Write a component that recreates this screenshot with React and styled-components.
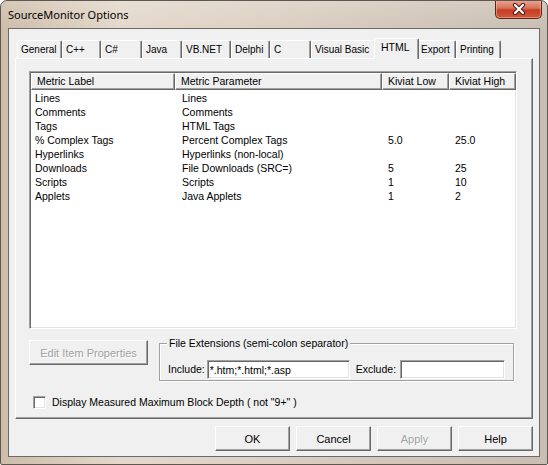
import React from "react";
import styled, { createGlobalStyle } from "styled-components";

const GlobalStyle = createGlobalStyle`
  html, body {
    margin: 0;
    padding: 0;
    background: #ffffff;
  }
  body {
    font-family: "Liberation Sans", Arial, sans-serif;
    font-size: 10.5px;
    color: #000;
  }
`;

const tabs = [
  { label: "General", width: 45 },
  { label: "C++", width: 39 },
  { label: "C#", width: 41 },
  { label: "Java", width: 40 },
  { label: "VB.NET", width: 49 },
  { label: "Delphi", width: 39 },
  { label: "C", width: 41 },
  { label: "Visual Basic", width: 65 },
  { label: "HTML", width: 41, active: true },
  { label: "Export", width: 39 },
  { label: "Printing", width: 45 },
];

const columns = [
  { label: "Metric Label", pad: 4 },
  { label: "Metric Parameter", pad: 7 },
  { label: "Kiviat Low", pad: 6 },
  { label: "Kiviat High", pad: 6 },
];

const metrics = [
  ["Lines", "Lines", "", ""],
  ["Comments", "Comments", "", ""],
  ["Tags", "HTML Tags", "", ""],
  ["% Complex Tags", "Percent Complex Tags", "5.0", "25.0"],
  ["Hyperlinks", "Hyperlinks (non-local)", "", ""],
  ["Downloads", "File Downloads (SRC=)", "5", "25"],
  ["Scripts", "Scripts", "1", "10"],
  ["Applets", "Java Applets", "1", "2"],
];

const App = () => {
  return (
    <>
      <GlobalStyle />
      <Window>
        <TitleBar>
          <Title>SourceMonitor Options</Title>
          <CloseButton>
            <svg width="16" height="12" viewBox="0 0 16 12">
              <path d="M4 2 L12 10 M12 2 L4 10" stroke="#4a1f17" strokeWidth="4.2" strokeLinecap="round" fill="none" />
              <path d="M4 2 L12 10 M12 2 L4 10" stroke="#ffffff" strokeWidth="2.2" strokeLinecap="round" fill="none" />
            </svg>
          </CloseButton>
        </TitleBar>
        <Client>
          <TabRow>
            {tabs.map((t) => (
              <Tab key={t.label} $w={t.width} $active={t.active}>
                {t.label}
              </Tab>
            ))}
          </TabRow>
          <Panel>
            <ListView>
              <HeaderRow>
                {columns.map((c) => (
                  <HeaderCell key={c.label}>{c.label}</HeaderCell>
                ))}
              </HeaderRow>
              <Rows>
                {metrics.map((m) => (
                  <Row key={m[0]}>
                    {m.map((v, i) => (
                      <Cell key={i} $pad={columns[i].pad}>{v}</Cell>
                    ))}
                  </Row>
                ))}
              </Rows>
            </ListView>
            <ControlsRow>
              <Button $width={119} disabled>Edit Item Properties</Button>
              <GroupBox>
                <Legend>File Extensions (semi-colon separator)</Legend>
                <FieldLabel>Include:</FieldLabel>
                <TextInput $width={143} $gap={2} defaultValue="*.htm;*.html;*.asp" />
                <FieldLabel $gap={6}>Exclude:</FieldLabel>
                <TextInput $width={105} $gap={4} defaultValue="" />
              </GroupBox>
            </ControlsRow>
            <CheckRow>
              <CheckBox />
              <CheckLabel>Display Measured Maximum Block Depth ( not "9+" )</CheckLabel>
            </CheckRow>
          </Panel>
          <ButtonRow>
            <Button $width={75}>OK</Button>
            <Button $width={75}>Cancel</Button>
            <Button $width={75} disabled>Apply</Button>
            <Button $width={75}>Help</Button>
          </ButtonRow>
        </Client>
      </Window>
    </>
  );
};

const Window = styled.div`
  box-sizing: border-box;
  width: 548px;
  height: 465px;
  display: flex;
  flex-direction: column;
  border: 1px solid #5e5850;
  border-radius: 7px 7px 2px 2px;
  background:
    linear-gradient(180deg, rgba(255, 255, 255, 0.18) 0px, rgba(255, 255, 255, 0) 28px),
    linear-gradient(90deg, #cdbda9 0%, #e3d8ca 22%, #ddd1c3 45%, #d3c7ba 70%, #c9beb2 100%);
  overflow: hidden;
`;

const TitleBar = styled.div`
  height: 27px;
  display: flex;
  justify-content: space-between;
  align-items: flex-start;
  padding: 0 5px 0 7px;
`;

const Title = styled.div`
  margin-top: 6px;
  font-family: "Noto Sans", "Open Sans", sans-serif;
  font-size: 11px;
  line-height: 16px;
  color: #000;
`;

const CloseButton = styled.div`
  margin-top: -1px;
  width: 47px;
  height: 19px;
  box-sizing: border-box;
  display: flex;
  align-items: center;
  justify-content: center;
  border: 1px solid #5a241a;
  border-top: none;
  border-radius: 0 0 5px 5px;
  background: linear-gradient(180deg, #eaa795 0%, #d9725a 45%, #c43e24 55%, #d2573c 100%);
  box-shadow: inset 0 0 0 1px rgba(255, 210, 190, 0.45);
`;

const Client = styled.div`
  flex: 1;
  margin: 0 7px 7px 7px;
  border: 1px solid #6a6a6a;
  background: #f0f0f0;
  padding: 9px 6px 0 6px;
  display: flex;
  flex-direction: column;
`;

const TabRow = styled.div`
  height: 20px;
  display: flex;
  align-items: flex-start;
  padding-left: 2px;
`;

const Tab = styled.div`
  box-sizing: border-box;
  position: relative;
  z-index: ${(p) => (p.$active ? 3 : 1)};
  width: ${(p) => (p.$active ? p.$w + 4 : p.$w)}px;
  height: ${(p) => (p.$active ? 21 : 18)}px;
  margin: ${(p) => (p.$active ? "0 -2px 0 -2px" : "2px 0 0 0")};
  padding: ${(p) => (p.$active ? "2px 0 0 6px" : "2px 0 0 3px")};
  background: #f0f0f0;
  border-top: 1px solid #ffffff;
  border-left: 1px solid #ffffff;
  border-right: 1px solid #696969;
  box-shadow: inset -1px 0 0 #a0a0a0;
  border-radius: 2px 2px 0 0;
  font-size: ${(p) => (p.$active ? 10.5 : 10)}px;
  line-height: 13px;
  white-space: nowrap;
`;

const Panel = styled.div`
  box-sizing: border-box;
  height: 361px;
  border-top: 1px solid #ffffff;
  border-left: 1px solid #ffffff;
  border-right: 1px solid #696969;
  border-bottom: 1px solid #696969;
  box-shadow: inset -1px -1px 0 #a0a0a0;
  padding: 12px 15px 0 13px;
  display: flex;
  flex-direction: column;
`;

const ListView = styled.div`
  box-sizing: border-box;
  height: 258px;
  background: #ffffff;
  border-top: 1px solid #a0a0a0;
  border-left: 1px solid #a0a0a0;
  border-right: 1px solid #ffffff;
  border-bottom: 1px solid #ffffff;
  box-shadow: inset 1px 1px 0 #696969, inset -1px -1px 0 #e3e3e3;
  padding: 1px;
  overflow: hidden;
`;

const HeaderRow = styled.div`
  display: grid;
  grid-template-columns: 144px 207px 67px 67px;
  height: 17px;
`;

const HeaderCell = styled.div`
  box-sizing: border-box;
  background: #f0f0f0;
  border-top: 1px solid #ffffff;
  border-left: 1px solid #ffffff;
  border-right: 1px solid #696969;
  border-bottom: 1px solid #696969;
  box-shadow: inset -1px -1px 0 #a0a0a0;
  padding-left: 5px;
  line-height: 14px;
  white-space: nowrap;
  overflow: hidden;
`;

const Rows = styled.div`
  padding-top: 1px;
`;

const Row = styled.div`
  display: grid;
  grid-template-columns: 144px 207px 67px 67px;
  height: 14px;
`;

const Cell = styled.div`
  padding-left: ${(p) => p.$pad}px;
  line-height: 14px;
  white-space: nowrap;
  overflow: hidden;
`;

const ControlsRow = styled.div`
  margin-top: 11px;
  display: flex;
  align-items: flex-start;
  gap: 11px;
`;

const Button = styled.button`
  box-sizing: border-box;
  width: ${(p) => p.$width}px;
  height: 25px;
  padding: 0;
  margin: 0;
  background: #f0f0f0;
  border-top: 1px solid #ffffff;
  border-left: 1px solid #ffffff;
  border-right: 1px solid #696969;
  border-bottom: 1px solid #696969;
  box-shadow: inset -1px -1px 0 #a0a0a0;
  border-radius: 0;
  font-family: "Liberation Sans", Arial, sans-serif;
  font-size: 11px;
  color: #000;
  &:disabled {
    color: #a0a0a0;
    text-shadow: 1px 1px 0 #ffffff;
  }
`;

const GroupBox = styled.div`
  box-sizing: border-box;
  position: relative;
  margin-top: 3px;
  width: 355px;
  height: 38px;
  border: 1px solid #a0a0a0;
  box-shadow: inset 1px 1px 0 #ffffff, 1px 1px 0 #ffffff;
  padding: 15px 0 0 8px;
  display: flex;
  align-items: center;
`;

const Legend = styled.span`
  position: absolute;
  left: 7px;
  top: -7px;
  padding: 0 2px;
  background: #f0f0f0;
  line-height: 13px;
  white-space: nowrap;
`;

const FieldLabel = styled.span`
  margin-left: ${(p) => p.$gap || 0}px;
  line-height: 19px;
  white-space: nowrap;
`;

const TextInput = styled.input`
  box-sizing: border-box;
  width: ${(p) => p.$width}px;
  height: 19px;
  margin: 0 0 0 ${(p) => p.$gap}px;
  padding: 0 0 0 2px;
  background: #ffffff;
  border-top: 1px solid #a0a0a0;
  border-left: 1px solid #a0a0a0;
  border-right: 1px solid #ffffff;
  border-bottom: 1px solid #ffffff;
  box-shadow: inset 1px 1px 0 #696969, inset -1px -1px 0 #e3e3e3;
  font-family: "Liberation Sans", Arial, sans-serif;
  font-size: 10.5px;
  color: #000;
  outline: none;
`;

const CheckRow = styled.div`
  margin-top: 15px;
  display: flex;
  align-items: center;
  padding-left: 4px;
`;

const CheckBox = styled.span`
  box-sizing: border-box;
  width: 13px;
  height: 13px;
  background: #ffffff;
  border-top: 1px solid #a0a0a0;
  border-left: 1px solid #a0a0a0;
  border-right: 1px solid #ffffff;
  border-bottom: 1px solid #ffffff;
  box-shadow: inset 1px 1px 0 #696969, inset -1px -1px 0 #e3e3e3;
`;

const CheckLabel = styled.span`
  margin-left: 6px;
  line-height: 13px;
  white-space: nowrap;
`;

const ButtonRow = styled.div`
  margin-top: 7px;
  display: flex;
  justify-content: flex-end;
  gap: 6px;
`;

export default App;
